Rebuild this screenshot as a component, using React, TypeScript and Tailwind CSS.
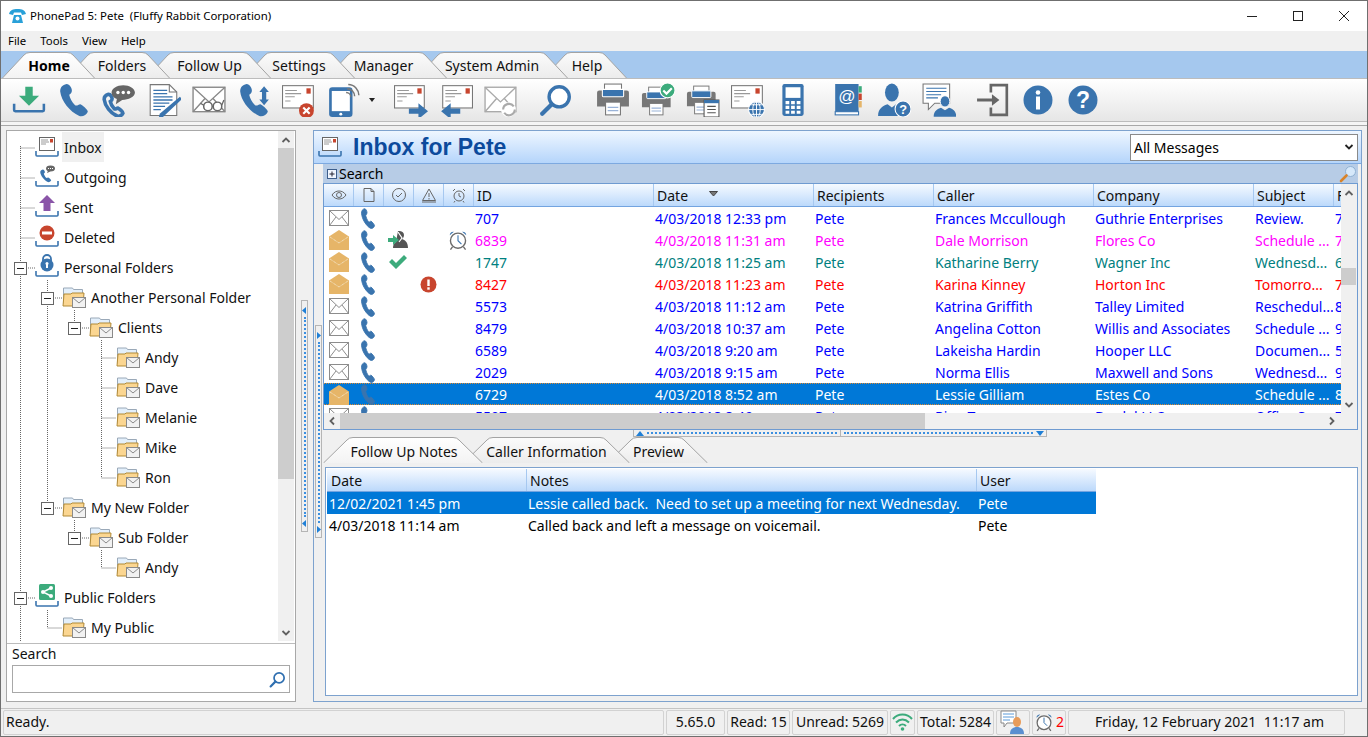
import React from "react";

const B = "#3a74ae";
const G = "#777777";
const R = "#c8452e";
const GR = "#3cab7c";
const PHONE = "M9 1C5 2 3 4 3 8C4 17 12 27 21 31C24 32 28 30 29 27C29 25 24 21 22 20C20 20 19 22 17 21C14 18 12 14 11.5 11C13 10 14 9 14 7C14 5 12 1 9 1Z";

function S({ children, w = 34, h = 34, vb = "0 0 32 32", none = false }: { children: React.ReactNode; w?: number; h?: number; vb?: string; none?: boolean }) {
  return (
    <svg width={w} height={h} viewBox={vb} preserveAspectRatio={none ? "none" : undefined} className="block shrink-0">
      {children}
    </svg>
  );
}

const Card = ({ x = 1, y = 3, w = 28, h = 20, stamp = true }: { x?: number; y?: number; w?: number; h?: number; stamp?: boolean }) => (
  <g>
    <rect x={x + 0.5} y={y + 0.5} width={w} height={h} fill="#fff" stroke="#777" />
    {stamp && <rect x={x + w - 6} y={y + 3} width={4} height={5} fill={R} />}
    <path d={`M${x + 3} ${y + 5}h11M${x + 3} ${y + 8}h15M${x + 3} ${y + 11}h9M${x + 3} ${y + 15}h5`} stroke="#999" strokeWidth="1" />
  </g>
);

const Mail = ({ color = "#8a8a8a", x = 1, y = 5, w = 30, h = 22 }: { color?: string; x?: number; y?: number; w?: number; h?: number }) => (
  <g fill="none" stroke={color} strokeWidth="1.3">
    <rect x={x} y={y} width={w} height={h} fill="#fff" />
    <path d={`M${x} ${y}L${x + w / 2} ${y + h * 0.6}L${x + w} ${y}M${x} ${y + h}L${x + w * 0.38} ${y + h * 0.45}M${x + w} ${y + h}L${x + w * 0.62} ${y + h * 0.45}`} />
  </g>
);

const Download = () => (
  <S>
    <path d="M12.500 3.500h7v8.500h6L16 21.500 6.500 12h6z" fill={GR} />
    <path d="M2 19.500v6a1 1 0 0 0 1 1h26a1 1 0 0 0 1-1v-6" fill="none" stroke={B} strokeWidth="2.400" />
  </S>
);
const Phone = () => (
  <S>
    <path d={PHONE} fill={B} />
  </S>
);
const PhoneChat = () => (
  <S>
    <g transform="translate(0 10) scale(.68)">
      <path d={PHONE} fill="none" stroke={B} strokeWidth="5" />
    </g>
    <path d="M20 2c-6 0-11 3-11 7 0 3 2 5 5 6l-1 5 6-4c6 0 12-3 12-7s-5-7-11-7z" fill="#666" />
    <circle cx="15" cy="9" r="1.6" fill="#fff" />
    <circle cx="20" cy="9" r="1.6" fill="#fff" />
    <circle cx="25" cy="9" r="1.6" fill="#fff" />
  </S>
);
const DocEdit = () => (
  <S>
    <path d="M3 1.500h18l7 7v22H3z" fill="#fff" stroke="#777" />
    <path d="M21 1.500v7h7" fill="none" stroke="#777" />
    <path d="M6 7h13M6 10h13M6 13h18M6 16h18M6 19h15M6 22h11M6 25h7" stroke={B} strokeWidth="1.200" />
    <path d="M31 13l2 2-18 17-4 1 1-4z" fill={B} />
  </S>
);
const EnvGlasses = () => (
  <S>
    <Mail color="#888" x={1} y={4} w={30} h={23} />
    <circle cx="15" cy="22" r="4" fill="#fff" stroke="#666" strokeWidth="1.400" />
    <circle cx="24" cy="22" r="4" fill="#fff" stroke="#666" strokeWidth="1.400" />
    <path d="M11 21l-3-2M19 22h1M28 21l2-5" stroke="#666" strokeWidth="1.200" fill="none" />
  </S>
);
const PhoneUpDown = () => (
  <S>
    <path d={PHONE} fill={B} />
    <path d="M25.500 3l4.500 5.500h-2.500v7H30L25.500 21 21 15.500h2.500v-7H21z" fill={B} />
  </S>
);
const EnvX = () => (
  <S>
    <Card x={0} y={2} w={29} h={21} />
    <circle cx="23" cy="26" r="7" fill={R} />
    <path d="M20 23l6 6M26 23l-6 6" stroke="#fff" strokeWidth="2" />
  </S>
);
const Mobile = () => (
  <S>
    <rect x="2" y="4" width="22" height="28" rx="3" fill={B} />
    <rect x="4.500" y="7.500" width="17" height="19" fill="#fff" />
    <circle cx="13" cy="29.300" r="1.400" fill="#fff" />
    <path d="M19 5.500c4 0 7 3 7 7M20 1.500c6 0 10 5 10 10M18 9c2.500 0 4.500 2 4.500 4.500" stroke="#777" fill="none" strokeWidth="1.400" />
  </S>
);
const EnvOut = () => (
  <S>
    <Card x={0} y={2} w={28} h={21} />
    <path d="M14 24h9v-5l9 7.500-9 7.500v-5h-9z" fill={B} />
  </S>
);
const EnvIn = () => (
  <S>
    <Card x={3} y={2} w={28} h={21} />
    <path d="M20 24h-9v-5l-9 7.500 9 7.500v-5h9z" fill={B} />
  </S>
);
const EnvRefresh = () => (
  <S>
    <Mail color="#aaa" x={1} y={4} w={29} h={23} />
    <circle cx="23" cy="25" r="7" fill="#fff" />
    <path d="M18 25a5.500 5.500 0 0 1 10-3M29 25a5.500 5.500 0 0 1-10 3" stroke="#aaa" strokeWidth="2" fill="none" />
  </S>
);
const Search = ({ s = 34, c = B }: { s?: number; c?: string }) => (
  <S w={s} h={s}>
    <circle cx="19" cy="13" r="9.500" fill="#fff" stroke={c} strokeWidth="3.200" />
    <path d="M12 20L3 29" stroke={c} strokeWidth="4" strokeLinecap="round" />
  </S>
);
const PrinterBase = () => (
  <g>
    <rect x="8" y="1" width="16" height="8" fill="#fff" stroke="#777" />
    <path d="M3 7h26a2 2 0 0 1 2 2v13H1V9a2 2 0 0 1 2-2z" fill="#777" />
    <path d="M6 6h20v6a1 1 0 0 1-1 1H7a1 1 0 0 1-1-1z" fill={B} stroke="#fff" />
    <rect x="9" y="18" width="14" height="12" fill="#fff" stroke="#777" />
    <path d="M11 23h10M11 26h10" stroke="#9ab3d8" strokeWidth="1.200" />
  </g>
);
const Printer = () => (
  <S>
    <PrinterBase />
  </S>
);
const PrinterCheck = () => (
  <S>
    <g transform="translate(0 3) scale(.9)">
      <PrinterBase />
    </g>
    <circle cx="25" cy="7" r="7" fill={GR} stroke="#fff" />
    <path d="M21 7l3 3 5-5" stroke="#fff" strokeWidth="2" fill="none" />
  </S>
);
const PrinterDoc = () => (
  <S>
    <g transform="translate(0 2) scale(.9)">
      <PrinterBase />
    </g>
    <rect x="17" y="16" width="14" height="16" fill="#fff" stroke="#555" />
    <rect x="17" y="16" width="14" height="3" fill={B} />
    <path d="M20 22h8M20 25h8M20 28h8" stroke="#555" />
  </S>
);
const EnvWeb = () => (
  <S>
    <Card x={0} y={2} w={29} h={21} />
    <circle cx="24" cy="25" r="7.500" fill={B} stroke="#fff" />
    <path d="M16.500 25h15M24 17.500v15M19 20.500h10M19 29.500h10" stroke="#fff" strokeWidth=".9" />
    <ellipse cx="24" cy="25" rx="3.500" ry="7.500" fill="none" stroke="#fff" strokeWidth=".9" />
  </S>
);
const Calc = () => (
  <S>
    <rect x="6" y="1" width="20" height="30" rx="2" fill={B} />
    <rect x="9" y="4" width="14" height="10" fill="#fff" />
    <path d="M9 17h3.500v3H9zM14.200 17h3.500v3h-3.500zM19.500 17H23v3h-3.500zM9 21.500h3.500v3H9zM14.200 21.500h3.500v3h-3.500zM19.500 21.500H23v3h-3.500zM9 26h3.500v3H9zM14.200 26h3.500v3h-3.500zM19.500 26H23v3h-3.500z" fill="#fff" />
  </S>
);
const AddrBook = () => (
  <S>
    <path d="M3 1h22v27H6a3 3 0 0 0-3 2z" fill={B} />
    <rect x="3" y="27" width="22" height="3" fill="#fff" stroke={B} />
    <rect x="25" y="3" width="3" height="6" fill={GR} />
    <rect x="25" y="10" width="3" height="6" fill={R} />
    <rect x="25" y="17" width="3" height="6" fill="#e5b56a" />
    <text x="14" y="18" textAnchor="middle" fontSize="16" fontFamily="Liberation Sans" fill="#fff">@</text>
  </S>
);
const Bust = () => (
  <g fill={B}>
    <ellipse cx="14" cy="9" rx="6.500" ry="8.500" />
    <path d="M1 31c0-7 5-10 9-11l4 3 4-3c4 1 9 4 9 11z" />
  </g>
);
const UserQ = () => (
  <S>
    <Bust />
    <circle cx="24.500" cy="24.500" r="7.500" fill={B} stroke="#fff" />
    <text x="24.500" y="29" textAnchor="middle" fontSize="12" fontWeight="700" fontFamily="Liberation Sans" fill="#fff">?</text>
  </S>
);
const ChatUser = () => (
  <S>
    <path d="M1 1h25v18H12l-6 6v-6H1z" fill="#fff" stroke="#777" />
    <path d="M4 5h19M4 8h19M4 11h14M4 14h11" stroke={B} strokeWidth="1" />
    <g transform="translate(11 12) scale(.76)">
      <ellipse cx="14" cy="7" rx="6" ry="7" fill={B} stroke="#fff" strokeWidth="1.200" />
      <path d="M0 26c0-7 5-10 9-11l5 3 5-3c4 1 9 4 9 11z" fill={B} />
    </g>
  </S>
);
const Exit = () => (
  <S>
    <path d="M14 9V2h15v28H14v-7" fill="none" stroke="#666" strokeWidth="2.500" />
    <path d="M1 14.500h14v-4l7 5.500-7 5.500v-4H1z" fill="#666" />
  </S>
);
const Info = () => (
  <S w={32} h={32}>
    <circle cx="16" cy="16" r="14.500" fill={B} />
    <circle cx="16" cy="8.500" r="2.300" fill="#fff" />
    <rect x="14" y="12.500" width="4" height="13" fill="#fff" />
  </S>
);
const Help = () => (
  <S w={32} h={32}>
    <circle cx="16" cy="16" r="14.500" fill={B} />
    <text x="16" y="24" textAnchor="middle" fontSize="23" fontWeight="700" fontFamily="Liberation Sans" fill="#fff">?</text>
  </S>
);

function Tray({ children }: { children: React.ReactNode }) {
  return (
    <S w={24} h={30} vb="0 0 24 30">
      <path d="M1 19v4a1 1 0 0 0 1 1h20a1 1 0 0 0 1-1v-4" fill="none" stroke={B} strokeWidth="1.600" />
      {children}
    </S>
  );
}
const InboxMini = () => (
  <g>
    <rect x="4.500" y="5.500" width="15" height="13" fill="#fff" stroke="#666" />
    <rect x="15" y="7" width="3" height="3.500" fill={R} />
    <path d="M6 8h7M6 10h8M6 12h5" stroke="#999" />
  </g>
);
const TreeInbox = () => <Tray><InboxMini /></Tray>;
const TreeOut = () => (
  <Tray>
    <g transform="translate(4 7) scale(.42)">
      <path d={PHONE} fill={B} />
    </g>
    <ellipse cx="15.500" cy="6.500" rx="4.500" ry="3" fill="#666" />
    <path d="M13 8.500l-1 2.500 3.500-1.500z" fill="#666" />
    <path d="M13 6.500h1M15 6.500h1M17 6.500h1" stroke="#fff" />
  </Tray>
);
const TreeSent = () => (
  <Tray>
    <path d="M12 3l8 8h-4.500v8h-7v-8H4z" fill="#8a55a8" />
  </Tray>
);
const TreeDel = () => (
  <Tray>
    <circle cx="12" cy="11" r="7.500" fill={R} />
    <rect x="7" y="9.500" width="10" height="3" fill="#fff" />
  </Tray>
);
const TreeLock = () => (
  <Tray>
    <path d="M8 9V7a4 4 0 0 1 8 0v2" fill="none" stroke={B} strokeWidth="1.800" />
    <circle cx="12" cy="13" r="6.500" fill={B} />
    <rect x="11" y="11" width="2" height="5" fill="#fff" />
    <circle cx="12" cy="11.500" r="1.500" fill="#fff" />
  </Tray>
);
const TreeShare = () => (
  <Tray>
    <rect x="4" y="2" width="16" height="16" rx="1.500" fill={GR} />
    <path d="M16 6l-8 4 8 4" stroke="#fff" strokeWidth="1.400" fill="none" />
    <circle cx="16" cy="6" r="2" fill="#fff" />
    <circle cx="8" cy="10" r="2" fill="#fff" />
    <circle cx="16" cy="14" r="2" fill="#fff" />
  </Tray>
);
const TreeFolder = () => (
  <S w={24} h={30} vb="0 0 24 30">
    <path d="M1.500 22V6h9l1 1.500h9V13" fill="#e3effb" stroke="#9aa9b8" />
    <path d="M1 24l1-12h7l1-1h12l-1 13z" fill="#fbd691" stroke="#b18a37" />
    <rect x="10.500" y="15.500" width="13" height="10" fill="#f2f2f2" stroke="#8a8a8a" />
    <path d="M10.500 15.500l6.500 5.500 6.500-5.500" fill="none" stroke="#8a8a8a" />
  </S>
);

const Chev = ({ d, color = "#606060" }: { d: string; color?: string }) => (
  <svg width="10" height="10" viewBox="0 0 10 10" className="block">
    <path d={d} fill="none" stroke={color} strokeWidth="1.800" />
  </svg>
);
const UP = "M1.500 7L5 3.500 8.500 7";
const DOWN = "M1.500 3L5 6.500 8.500 3";
const LEFT = "M7 1.500L3.500 5 7 8.500";
const RIGHT = "M3 1.500L6.500 5 3 8.500";

function TabShape({ w, h, id, active, s }: { w: number; h: number; id: string; active?: boolean; s: number }) {
  return (
    <svg width={w} height={h} viewBox={`0 0 ${w} ${h}`} className="absolute left-0 top-0 block">
      <defs>
        <linearGradient id={id} x1="0" y1="0" x2="0" y2="1">
          <stop offset="0" stopColor={active ? "#ffffff" : "#fbfbfb"} />
          <stop offset="1" stopColor={active ? "#f3f3f3" : "#ececec"} />
        </linearGradient>
      </defs>
      <path
        d={`M0.500 ${h}L${s - 2} 3Q${s} 0.500 ${s + 4} 0.500L${w - s - 4} 0.500Q${w - s} 0.500 ${w - s + 2} 3L${w - 0.500} ${h}`}
        fill={`url(#${id})`}
        stroke="#a3a3a3"
      />
    </svg>
  );
}

const topTabs = [
  { t: "Home", w: 93, cls: "z-[7] ml-[1px] font-bold text-black", pad: "pl-[1px]" },
  { t: "Folders", w: 104, cls: "z-[6] ml-[-29px]", pad: "pl-[8px]" },
  { t: "Follow Up", w: 125, cls: "z-[5] ml-[-24px]", pad: "pl-[2px]" },
  { t: "Settings", w: 112, cls: "z-[4] ml-[-28px]", pad: "" },
  { t: "Manager", w: 121, cls: "z-[3] ml-[-29px]", pad: "pr-[6px]" },
  { t: "System Admin", w: 152, cls: "z-[2] ml-[-31px]", pad: "" },
  { t: "Help", w: 84, cls: "z-[1] ml-[-25px]", pad: "pl-[4px]" },
];

const lowerTabs = [
  { t: "Follow Up Notes", w: 160, cls: "z-[3]", pad: "pl-[2px]", active: true },
  { t: "Caller Information", w: 167, cls: "z-[2] ml-[-20px]", pad: "", active: false },
  { t: "Preview", w: 101, cls: "z-[1] ml-[-23px]", pad: "pl-[2px]", active: false },
];

const toolbar: { el: React.ReactNode; cls?: string }[] = [
  { el: <Download /> },
  { el: <Phone /> },
  { el: <PhoneChat /> },
  { el: <DocEdit /> },
  { el: <EnvGlasses /> },
  { el: <PhoneUpDown /> },
  { el: <EnvX /> },
  { el: <Mobile /> },
  { el: <EnvOut />, cls: "ml-[22px]" },
  { el: <EnvIn /> },
  { el: <EnvRefresh /> },
  { el: <Search />, cls: "ml-[10px]" },
  { el: <Printer />, cls: "ml-[12px]" },
  { el: <PrinterCheck /> },
  { el: <PrinterDoc /> },
  { el: <EnvWeb /> },
  { el: <Calc /> },
  { el: <AddrBook />, cls: "ml-[11px]" },
  { el: <UserQ /> },
  { el: <ChatUser /> },
  { el: <Exit />, cls: "ml-[9px]" },
  { el: <Info /> },
  { el: <Help /> },
];

const levelCls = ["pl-[28px]", "pl-[55px]", "pl-[82px]", "pl-[109px]"];
const tree: { t: string; l: number; icon: React.ReactNode; sel?: boolean }[] = [
  { t: "Inbox", l: 0, icon: <TreeInbox />, sel: true },
  { t: "Outgoing", l: 0, icon: <TreeOut /> },
  { t: "Sent", l: 0, icon: <TreeSent /> },
  { t: "Deleted", l: 0, icon: <TreeDel /> },
  { t: "Personal Folders", l: 0, icon: <TreeLock /> },
  { t: "Another Personal Folder", l: 1, icon: <TreeFolder /> },
  { t: "Clients", l: 2, icon: <TreeFolder /> },
  { t: "Andy", l: 3, icon: <TreeFolder /> },
  { t: "Dave", l: 3, icon: <TreeFolder /> },
  { t: "Melanie", l: 3, icon: <TreeFolder /> },
  { t: "Mike", l: 3, icon: <TreeFolder /> },
  { t: "Ron", l: 3, icon: <TreeFolder /> },
  { t: "My New Folder", l: 1, icon: <TreeFolder /> },
  { t: "Sub Folder", l: 2, icon: <TreeFolder /> },
  { t: "Andy", l: 3, icon: <TreeFolder /> },
  { t: "Public Folders", l: 0, icon: <TreeShare /> },
  { t: "My Public", l: 1, icon: <TreeFolder /> },
];

function TreeLines() {
  const lines = [
    "M20.500 146V642",
    "M20.500 148H35M20.500 178H35M20.500 208H35M20.500 238H35M26 268H35M26 598H35",
    "M47.500 280V503M53 298H62M53 508H62",
    "M74.500 310V322M80 328H89",
    "M101.500 340V478M101.500 358H116M101.500 388H116M101.500 418H116M101.500 448H116M101.500 478H116",
    "M74.500 520V532M80 538H89M101.500 550V568H116",
    "M47.500 610V628H62",
  ];
  const boxes = [[20, 268], [47, 298], [74, 328], [47, 508], [74, 538], [20, 598]];
  return (
    <svg viewBox="7 131 271 512" className="absolute left-0 top-0 block h-[512px] w-[271px]">
      {lines.map((d) => (
        <path key={d} d={d} stroke="#666" strokeDasharray="1 1" fill="none" />
      ))}
      {boxes.map(([x, y]) => (
        <g key={`${x}-${y}`}>
          <rect x={x - 5.500} y={y - 5.500} width="12" height="12" fill="#fff" stroke="#666" />
          <path d={`M${x - 3} ${y + 0.500}h7`} stroke="#222" />
        </g>
      ))}
    </svg>
  );
}

type Row = { id: string; d: string; c: string; co: string; s: string; x: string; color: string; open?: boolean; sel?: boolean; a?: string };
const rows: Row[] = [
  { id: "707", d: "4/03/2018 12:33 pm", c: "Frances Mccullough", co: "Guthrie Enterprises", s: "Review.", x: "7", color: "text-[#0000ff]" },
  { id: "6839", d: "4/03/2018 11:31 am", c: "Dale Morrison", co: "Flores Co", s: "Schedule ...", x: "7", color: "text-[#ff00ff]", open: true, a: "m" },
  { id: "1747", d: "4/03/2018 11:25 am", c: "Katharine Berry", co: "Wagner Inc", s: "Wednesd...", x: "6", color: "text-[#008080]", open: true, a: "c" },
  { id: "8427", d: "4/03/2018 11:23 am", c: "Karina Kinney", co: "Horton Inc", s: "Tomorro...", x: "7", color: "text-[#ff0000]", open: true, a: "r" },
  { id: "5573", d: "4/03/2018 11:12 am", c: "Katrina Griffith", co: "Talley Limited", s: "Reschedul...", x: "8", color: "text-[#0000ff]" },
  { id: "8479", d: "4/03/2018 10:37 am", c: "Angelina Cotton", co: "Willis and Associates", s: "Schedule ...", x: "9", color: "text-[#0000ff]" },
  { id: "6589", d: "4/03/2018 9:20 am", c: "Lakeisha Hardin", co: "Hooper LLC", s: "Documen...", x: "5", color: "text-[#0000ff]" },
  { id: "2029", d: "4/03/2018 9:15 am", c: "Norma Ellis", co: "Maxwell and Sons", s: "Wednesd...", x: "9", color: "text-[#0000ff]" },
  { id: "6729", d: "4/03/2018 8:52 am", c: "Lessie Gilliam", co: "Estes Co", s: "Schedule ...", x: "8", color: "text-white", open: true, sel: true },
  { id: "5507", d: "4/03/2018 8:49 am", c: "Rian Tran", co: "Bradel LLC", s: "Office S...", x: "7", color: "text-[#0000ff]" },
];

const gridCols = "grid grid-cols-[29px_30px_30px_30px_30px_180px_160px_120px_160px_160px_80px_40px]";

const ClosedEnv = () => (
  <S w={20} h={16} vb="0 0 20 16">
    <rect x=".5" y=".5" width="19" height="15" fill="#fff" stroke="#8c8c8c" />
    <path d="M.5 .5L10 9.500 19.500 .5M.5 15.500L7 7M19.500 15.500L13 7" fill="none" stroke="#8c8c8c" />
  </S>
);
const OpenEnv = () => (
  <S w={20} h={20} vb="0 0 20 20">
    <path d="M0 6.500L10 0l10 6.500V20H0z" fill="#e6b568" />
    <path d="M1 7l9 6 9-6" fill="none" stroke="#f5e6c8" strokeDasharray="1 .6" />
  </S>
);
const TblPhone = () => (
  <S w={16} h={21} none>
    <path d={PHONE} fill={B} stroke={B} strokeWidth="1.500" />
  </S>
);
const Alarm = ({ s = 22 }: { s?: number }) => (
  <S w={s} h={s}>
    <path d="M4 9a5 5 0 0 1 6-5zM28 9a5 5 0 0 0-6-5z" fill={B} />
    <circle cx="16" cy="17" r="11" fill="#fff" stroke="#6b6b6b" strokeWidth="2" />
    <path d="M16 9v8l5 5" fill="none" stroke={B} strokeWidth="1.600" />
    <path d="M8 26l-3 4M24 26l3 4" stroke="#6b6b6b" strokeWidth="2" />
  </S>
);
const UserArrow = () => (
  <S w={22} h={20} vb="0 0 22 20">
    <path d="M11 1c3-.5 6 1 6 4 0 2-1 3-2 4 3 1 6 3 6 9H6c0-3 1-5 3-6z" fill="#555" />
    <path d="M11 2l4 6-3 4" fill="none" stroke="#fff" strokeWidth="1.200" />
    <path d="M1 8h5V5l6 5-6 5v-3H1z" fill={GR} />
  </S>
);
const GreenCheck = () => (
  <S w={20} h={16} vb="0 0 20 16">
    <path d="M1 8l3-3 4 4 8-8 3 3L8 15z" fill={GR} />
  </S>
);
const Excl = () => (
  <S w={17} h={17} vb="0 0 17 17">
    <circle cx="8.500" cy="8.500" r="8" fill={R} />
    <rect x="7.300" y="3.500" width="2.400" height="6.500" fill="#fff" />
    <rect x="7.300" y="11.300" width="2.400" height="2.400" fill="#fff" />
  </S>
);

const HdrIcon = ({ children }: { children: React.ReactNode }) => (
  <S w={16} h={16} vb="0 0 16 16">
    <g fill="none" stroke="#666" strokeWidth="1">{children}</g>
  </S>
);

const headerGrad = "bg-gradient-to-b from-[#f6faff] to-[#bcd9fb]";

function HCell({ children, last }: { children?: React.ReactNode; last?: boolean }) {
  return (
    <div className={`flex h-[22px] items-center overflow-hidden whitespace-nowrap ${last ? "pl-[4px]" : "border-l border-[#a6c8f0] pl-[3px]"}`}>
      {children}
    </div>
  );
}
function IconHead({ children, first }: { children: React.ReactNode; first?: boolean }) {
  return <div className={`flex h-[22px] items-center justify-center ${first ? "" : "border-l border-[#a6c8f0]"}`}>{children}</div>;
}

function Grip({ cls, first }: { cls: string; first?: boolean }) {
  const arrow = first ? "M4 0L0 3.500 4 7z" : "M1 0l4 3.500L1 7z";
  return (
    <div className={`flex w-[7px] flex-col items-center justify-between border border-[#b5b5b5] ${cls}`}>
      <svg width="5" height="7" viewBox="0 0 5 7" className="mt-[6px] block"><path d={arrow} fill="#1f7fd6" /></svg>
      <div className="my-[3px] w-0 flex-1 border-l-2 border-dotted border-[#3b8fe0]" />
      <svg width="5" height="7" viewBox="0 0 5 7" className="mb-[4px] block"><path d={arrow} fill="#1f7fd6" /></svg>
    </div>
  );
}

const stat = "flex h-[25px] items-center justify-center rounded-[2px] border border-[#d2d2d2] pb-[2px] text-[14px] whitespace-nowrap";

export default function App() {
  return (
    <div className="flex h-[737px] w-[1368px] flex-col overflow-hidden border border-[#6f6f6f] bg-[#f0f0f0] font-['Noto_Sans','Open_Sans','Liberation_Sans',sans-serif] text-[14px] text-[#111]">
      {/* title bar */}
      <div className="flex h-[30px] items-center bg-white">
        <div className="ml-[8px] w-[17px]">
          <S w={17} h={15} vb="0 0 17 15">
            <path d="M0 5C1 1 4 0 8.500 0S16 1 17 5l-4 1-1-2.500H5L4 6z" fill="#29a0d8" />
            <path d="M3 14l2-8h7l2 8z" fill="#29a0d8" />
            <circle cx="8.500" cy="9.500" r="2" fill="#fff" />
          </S>
        </div>
        <div className="ml-[4px] whitespace-pre text-[11.4px] text-black">PhonePad 5: Pete  (Fluffy Rabbit Corporation)</div>
        <div className="ml-auto flex items-center">
          <div className="flex h-[30px] w-[46px] items-center justify-center">
            <svg width="10" height="10" viewBox="0 0 10 10" className="block"><path d="M0 5.500h10" stroke="#222" /></svg>
          </div>
          <div className="flex h-[30px] w-[46px] items-center justify-center">
            <svg width="10" height="10" viewBox="0 0 10 10" className="block"><rect x=".5" y=".5" width="9" height="9" fill="none" stroke="#222" /></svg>
          </div>
          <div className="flex h-[30px] w-[46px] items-center justify-center">
            <svg width="10" height="10" viewBox="0 0 10 10" className="block"><path d="M0 0l10 10M10 0L0 10" stroke="#222" /></svg>
          </div>
        </div>
      </div>

      {/* menu */}
      <div className="flex h-[20px] items-center gap-[14px] bg-[#f0f0f0] pl-[7px] text-[11.4px] text-black">
        <span>File</span>
        <span>Tools</span>
        <span>View</span>
        <span>Help</span>
      </div>

      {/* top tabs */}
      <div className="flex h-[27px] items-end bg-[#a5c8ee]">
        {topTabs.map((t) => (
          <div key={t.t} className={`relative h-[26px] shrink-0 ${t.cls}`} style={{ width: t.w }}>
            <TabShape w={t.w} h={26} id={`tt${t.w}`} active={t.t === "Home"} s={24} />
            <div className={`relative flex h-full items-center justify-center ${t.pad}`}>{t.t}</div>
          </div>
        ))}
      </div>

      {/* toolbar */}
      <div className="flex h-[44px] items-center border-y border-[#bcbcbc] bg-gradient-to-b from-[#ffffff] to-[#e6e6e6] pl-[5px]">
        {toolbar.map((it, i) => (
          <div key={i} className={`relative flex w-[45px] shrink-0 justify-center ${it.cls ?? ""}`}>
            {it.el}
            {i === 7 && (
              <svg width="6" height="4" viewBox="0 0 6 4" className="absolute left-[48px] top-[15px] block">
                <path d="M0 0h6L3 4z" fill="#222" />
              </svg>
            )}
          </div>
        ))}
      </div>
      <div className="h-[3px] bg-[#f5f5f5]" />
      <div className="h-px bg-[#a8a8a8]" />

      {/* main */}
      <div className="flex h-[582px] pl-[5px] pt-[4px]">
        {/* left panel */}
        <div className="flex h-[572px] w-[290px] shrink-0 flex-col border border-[#a8a8a8] bg-white">
          <div className="flex h-[512px] overflow-hidden">
            <div className="relative h-[512px] w-[271px] overflow-hidden pt-[1px]">
              <TreeLines />
              {tree.map((r, i) => (
                <div key={i} className={`relative flex h-[30px] items-center ${levelCls[r.l]}`}>
                  {r.icon}
                  <div className={`ml-[3px] flex h-[30px] items-center whitespace-nowrap px-[2px] ${r.sel ? "bg-[#f0f0f0]" : ""}`}>{r.t}</div>
                </div>
              ))}
            </div>
            <div className="flex h-[510px] w-[16px] shrink-0 flex-col bg-[#f0f0f0]">
              <div className="flex h-[17px] items-center justify-center"><Chev d={UP} /></div>
              <div className="h-[331px] bg-[#cdcdcd]" />
              <div className="flex-1" />
              <div className="flex h-[17px] items-center justify-center"><Chev d={DOWN} /></div>
            </div>
          </div>
          <div className="flex-1 border-t border-[#bcbcbc] px-[5px]">
            <div className="h-[21px] leading-[20px]">Search</div>
            <div className="flex h-[28px] items-center justify-end border border-[#a8a8a8] pr-[3px]">
              <Search s={17} c="#2f6fb0" />
            </div>
          </div>
        </div>

        {/* splitter */}
        <div className="flex w-[17px] shrink-0 items-start pl-[5px] pt-[170px]">
          <Grip cls="h-[232px]" first />
        </div>

        {/* right panel */}
        <div className="flex h-[572px] w-[1049px] shrink-0 flex-col border border-[#7da2ce]">
          <div className="flex h-[33px] shrink-0 items-center border-b border-[#7da9e0] bg-gradient-to-b from-[#eef6ff] to-[#b5d5fb] pl-[4px] pr-[3px]">
            <S w={24} h={30} vb="0 0 24 30"><InboxMini /><path d="M1 19v4a1 1 0 0 0 1 1h20a1 1 0 0 0 1-1v-4" fill="none" stroke={B} strokeWidth="1.600" /></S>
            <div className="ml-[11px] font-['Liberation_Sans',sans-serif] text-[23px] font-bold text-[#0c4a9c]">Inbox for Pete</div>
            <div className="ml-auto flex h-[27px] w-[228px] items-center justify-between border border-[#8a8a8a] bg-white pl-[3px] pr-[3px]">
              <span className="text-black">All Messages</span>
              <Chev d={DOWN} color="#222" />
            </div>
          </div>
          <div className="flex min-h-0 flex-1">
            <div className="flex w-[9px] shrink-0 items-start pl-[1px] pt-[161px]">
              <Grip cls="h-[213px]" />
            </div>
            <div className="flex min-w-0 flex-1 flex-col pr-[3px]">
              {/* search strip */}
              <div className="flex h-[19px] shrink-0 items-center bg-[#b7cce6] pl-[4px] pr-[1px]">
                <svg width="10" height="10" viewBox="0 0 10 10" className="block">
                  <rect x=".5" y=".5" width="9" height="9" fill="#f0f6ff" stroke="#3d5e8c" />
                  <path d="M2.500 5h5M5 2.500v5" stroke="#223" />
                </svg>
                <span className="ml-[2px] text-black">Search</span>
                <svg width="18" height="18" viewBox="0 0 18 18" className="ml-auto block">
                  <circle cx="11.500" cy="6.500" r="5" fill="#d6e8fa" stroke="#8fb1d3" />
                  <path d="M7.500 10.500L2 16" stroke="#d9832a" strokeWidth="2.600" strokeLinecap="round" />
                </svg>
              </div>
              {/* table */}
              <div className="flex h-[247px] shrink-0 flex-col border border-[#6f9bd1]">
                <div className="flex min-h-0 flex-1">
                  <div className="w-[1017px] shrink-0 overflow-hidden">
                    <div className={`${gridCols} h-[23px] items-center border-b border-[#73a4e0] ${headerGrad}`}>
                      <IconHead first>
                        <HdrIcon><path d="M1 8c2-3 4.500-4 7-4s5 1 7 4c-2 3-4.500 4-7 4s-5-1-7-4z" /><circle cx="8" cy="8" r="2.500" /></HdrIcon>
                      </IconHead>
                      <IconHead><HdrIcon><path d="M3 1.500h7l3 3v10H3zM10 1.500v3h3" /></HdrIcon></IconHead>
                      <IconHead><HdrIcon><circle cx="8" cy="8" r="6.500" /><path d="M5 8l2 2 4-4" /></HdrIcon></IconHead>
                      <IconHead><HdrIcon><path d="M8 2l6.500 11.500h-13zM8 6v4M8 11v1.500M1 15h14" /></HdrIcon></IconHead>
                      <IconHead><HdrIcon><circle cx="8" cy="9" r="5" /><path d="M8 6v3l2 1M2 4l2-2M14 4l-2-2M4 14l-1 1.500M12 14l1 1.500" /></HdrIcon></IconHead>
                      <HCell>ID</HCell>
                      <HCell>
                        Date
                        <svg width="9" height="6" viewBox="0 0 9 6" className="ml-[21px] mb-[3px] block"><path d="M.5 .5h8L4.500 5z" fill="#777" stroke="#444" /></svg>
                      </HCell>
                      <HCell>Recipients</HCell>
                      <HCell>Caller</HCell>
                      <HCell>Company</HCell>
                      <HCell>Subject</HCell>
                      <HCell>F</HCell>
                    </div>
                    <div className="h-[206px] overflow-hidden bg-white">
                      {rows.map((r) => (
                        <div
                          key={r.id}
                          className={`${gridCols} h-[22px] items-center whitespace-nowrap ${r.color} ${r.sel ? "border-y border-dotted border-[#e08a30] bg-[#0078d7]" : ""}`}
                        >
                          <div className="flex justify-center">{r.open ? <OpenEnv /> : <ClosedEnv />}</div>
                          <div className="flex justify-center"><TblPhone /></div>
                          <div className="flex justify-center">{r.a === "m" ? <UserArrow /> : r.a === "c" ? <GreenCheck /> : null}</div>
                          <div className="flex justify-center">{r.a === "r" ? <Excl /> : null}</div>
                          <div className="flex justify-center">{r.a === "m" ? <Alarm /> : null}</div>
                          <div className="pl-[2px]">{r.id}</div>
                          <div className="pl-[2px]">{r.d}</div>
                          <div className="pl-[2px]">Pete</div>
                          <div className="overflow-hidden pl-[2px]">{r.c}</div>
                          <div className="overflow-hidden pl-[2px]">{r.co}</div>
                          <div className="overflow-hidden pl-[2px]">{r.s}</div>
                          <div className="pl-[2px]">{r.x}</div>
                        </div>
                      ))}
                    </div>
                  </div>
                  <div className="flex w-[15px] shrink-0 flex-col bg-[#f0f0f0]">
                    <div className="flex h-[17px] items-center justify-center"><Chev d={UP} /></div>
                    <div className="mt-[67px] h-[17px] bg-[#cdcdcd]" />
                    <div className="flex-1" />
                    <div className="flex h-[17px] items-center justify-center"><Chev d={DOWN} /></div>
                  </div>
                </div>
                <div className="flex h-[16px] shrink-0 items-center bg-[#f0f0f0]">
                  <div className="flex h-[16px] w-[16px] items-center justify-center"><Chev d={LEFT} /></div>
                  <div className="h-[16px] w-[585px] bg-[#cdcdcd]" />
                  <div className="flex-1" />
                  <div className="mr-[17px] flex h-[16px] w-[16px] items-center justify-center"><Chev d={RIGHT} /></div>
                </div>
              </div>
              {/* horizontal grip */}
              <div className="ml-[310px] flex h-[7px] w-[414px] shrink-0 items-center border border-t-0 border-[#b5b5b5]">
                <svg width="8" height="5" viewBox="0 0 8 5" className="ml-[2px] block"><path d="M4 0l4 5H0z" fill="#1f7fd6" /></svg>
                <div className="mx-[3px] h-0 flex-1 border-t-2 border-dotted border-[#3b8fe0]" />
                <div className="h-full w-px bg-[#b5b5b5]" />
                <div className="mx-[3px] h-0 flex-1 border-t-2 border-dotted border-[#3b8fe0]" />
                <svg width="8" height="5" viewBox="0 0 8 5" className="mr-[2px] block"><path d="M4 5l4-5H0z" fill="#1f7fd6" /></svg>
              </div>
              {/* lower tabs */}
              <div className="flex h-[26px] shrink-0 items-end">
                {lowerTabs.map((t) => (
                  <div key={t.t} className={`relative h-[26px] shrink-0 ${t.cls}`} style={{ width: t.w }}>
                    <TabShape w={t.w} h={26} id={`lt${t.w}`} active={t.active} s={26} />
                    <div className={`relative flex h-full items-center justify-center pt-[3px] ${t.pad}`}>{t.t}</div>
                  </div>
                ))}
              </div>
              {/* notes */}
              <div className="ml-[2px] mt-[4px] h-[229px] border border-[#7da2ce] bg-white p-px">
                <div className={`grid h-[23px] w-[769px] grid-cols-[199px_450px_120px] items-center border-b border-[#73a4e0] ${headerGrad}`}>
                  <HCell last>Date</HCell>
                  <HCell>Notes</HCell>
                  <HCell>User</HCell>
                </div>
                <div className="grid h-[22px] w-[769px] grid-cols-[199px_450px_120px] items-center whitespace-nowrap bg-[#0078d7] text-white">
                  <div className="pl-[2px]">12/02/2021 1:45 pm</div>
                  <div className="whitespace-pre pl-[2px]">Lessie called back.  Need to set up a meeting for next Wednesday.</div>
                  <div className="pl-[2px]">Pete</div>
                </div>
                <div className="grid h-[22px] w-[769px] grid-cols-[199px_450px_120px] items-center whitespace-nowrap text-black">
                  <div className="pl-[2px]">4/03/2018 11:14 am</div>
                  <div className="pl-[2px]">Called back and left a message on voicemail.</div>
                  <div className="pl-[2px]">Pete</div>
                </div>
              </div>
            </div>
          </div>
        </div>
      </div>

      {/* status bar */}
      <div className="flex h-[28px] items-center gap-[2px] border-t border-[#c4c4c4] pl-[2px]">
        <div className={`${stat} w-[661px] justify-start pl-[2px]`}>Ready.</div>
        <div className={`${stat} w-[59px]`}>5.65.0</div>
        <div className={`${stat} w-[63px]`}>Read: 15</div>
        <div className={`${stat} w-[96px]`}>Unread: 5269</div>
        <div className={`${stat} w-[25px]`}>
          <S w={21} h={20} vb="0 0 21 20">
            <path d="M1 7c5-6 14-6 19 0M4 10.500c4-4 9-4 13 0M7 14c2-2 5-2 7 0" fill="none" stroke={GR} strokeWidth="2" />
            <circle cx="10.500" cy="17" r="1.800" fill={GR} />
          </S>
        </div>
        <div className={`${stat} w-[77px]`}>Total: 5284</div>
        <div className={`${stat} w-[34px]`}>
          <S w={26} h={24} vb="0 0 26 24">
            <path d="M1 1h15v12H7l-3 4v-4H1z" fill="#fff" stroke="#888" />
            <path d="M3 4h11M3 7h11M3 10h7" stroke="#5a9ad8" />
            <ellipse cx="17" cy="12" rx="4" ry="5" fill="#e89c5a" />
            <path d="M10 24c0-5 3-7 7-7s7 2 7 7z" fill="#5a8fd0" />
          </S>
        </div>
        <div className={`${stat} w-[34px] gap-[2px]`}>
          <Alarm s={20} />
          <span className="text-[#ff0000]">2</span>
        </div>
        <div className={`${stat} w-[277px] pl-[6px]`}>Friday, 12 February 2021&nbsp;&nbsp;11:17 am</div>
      </div>
    </div>
  );
}
